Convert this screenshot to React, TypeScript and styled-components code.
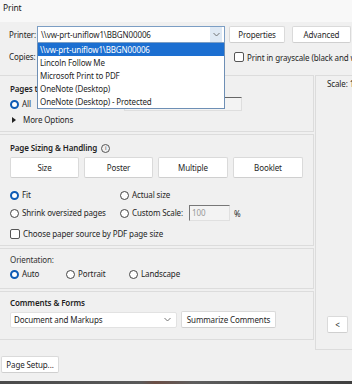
import React from "react";
import styled, { createGlobalStyle } from "styled-components";

const Global = createGlobalStyle`
  html, body { margin: 0; padding: 0; }
  body {
    background: #f0f0f0;
    font-family: "Noto Sans", "Open Sans", sans-serif;
    font-size: 8px;
    letter-spacing: -0.12px;
    color: #1f1f1f;
    width: 352px;
    height: 384px;
    overflow: hidden;
  }
  * { box-sizing: border-box; }
`;

const Window = styled.div`
  position: relative;
  width: 352px;
  height: 384px;
  overflow: hidden;
  display: flex;
  flex-direction: column;
`;

const TitleBar = styled.div`
  height: 22px;
  padding: 2px 0 0 3px;
  background: #f8f8f8;
  font-size: 8.5px;
  line-height: 12px;
  color: #1a1a1a;
`;

const Header = styled.div`
  position: relative;
  padding: 4px 0 0 9px;
  display: flex;
  flex-direction: column;
  gap: 8px;
  height: 53px;
`;

const Row = styled.div`
  display: flex;
  align-items: center;
  white-space: nowrap;
`;

const Label = styled.span<{ $w?: number }>`
  width: ${(p) => p.$w ?? 28}px;
  flex: none;
  line-height: 12px;
`;

const Select = styled.div<{ $w: number; $focus?: boolean }>`
  width: ${(p) => p.$w}px;
  height: ${(p) => (p.$focus ? 17 : 16)}px;
  flex: none;
  display: flex;
  align-items: center;
  justify-content: space-between;
  padding-left: 3px;
  background: #fff;
  border: 1px solid ${(p) => (p.$focus ? "#7c9ec4" : "#e2e2e2")};
  border-radius: ${(p) => (p.$focus ? 0 : 2)}px;
`;

const Chevron = styled.span<{ $hl?: boolean }>`
  width: 12px;
  height: 100%;
  display: flex;
  align-items: center;
  justify-content: center;
  background: ${(p) => (p.$hl ? "#dfe9f4" : "transparent")};
  margin-right: ${(p) => (p.$hl ? 2 : 3)}px;
`;

const Button = styled.button<{ $w: number; $h?: number; $ml?: number }>`
  width: ${(p) => p.$w}px;
  height: ${(p) => p.$h ?? 17}px;
  margin-left: ${(p) => p.$ml ?? 0}px;
  flex: none;
  padding: 0;
  background: #fff;
  border: 1px solid #dadada;
  border-bottom-color: #cfcfcf;
  border-radius: 2px;
  font: inherit;
  letter-spacing: inherit;
  color: #1f1f1f;
  display: flex;
  align-items: center;
  justify-content: center;
  white-space: nowrap;
`;

const CheckBox = styled.span`
  width: 10px;
  height: 10px;
  flex: none;
  border: 1px solid #555;
  border-radius: 2px;
  background: #fff;
  margin-right: 3px;
`;

const Option = styled.label<{ $w?: number }>`
  display: flex;
  align-items: center;
  white-space: nowrap;
  width: ${(p) => (p.$w ? `${p.$w}px` : "auto")};
  flex: none;
  line-height: 12px;
`;

const Radio = styled.span<{ $on?: boolean }>`
  width: 9px;
  height: 9px;
  flex: none;
  border-radius: 50%;
  margin-right: 3px;
  background: #fff;
  border: ${(p) => (p.$on ? "2.5px solid #0f5bb5" : "1px solid #444")};
`;

const DropList = styled.ul`
  position: absolute;
  left: 37px;
  top: 21px;
  width: 188px;
  margin: 0;
  padding: 0;
  list-style: none;
  background: #fff;
  border: 1px solid #6e8fb5;
  border-top: none;
  z-index: 5;
`;

const DropItem = styled.li<{ $sel?: boolean }>`
  height: 13px;
  line-height: 13px;
  padding-left: 2px;
  white-space: nowrap;
  background: ${(p) => (p.$sel ? "#1c6fd1" : "transparent")};
  color: ${(p) => (p.$sel ? "#fff" : "#1f1f1f")};
`;

const Main = styled.div`
  display: flex;
  gap: 1px;
  margin-left: -1px;
`;

const LeftCol = styled.div`
  width: 315px;
  flex: none;
  display: flex;
  flex-direction: column;
  gap: 2px;
`;

const Section = styled.section<{ $h: number }>`
  height: ${(p) => p.$h}px;
  border: 1px solid #dcdcdc;
  background: #f0f0f0;
  padding: 0 0 0 10px;
  display: flex;
  flex-direction: column;
`;

const SectionTitle = styled.div<{ $mt: number; $bold?: boolean }>`
  margin-top: ${(p) => p.$mt}px;
  font-weight: ${(p) => (p.$bold === false ? 400 : 600)};
  color: ${(p) => (p.$bold === false ? "#333" : "#1f1f1f")};
  line-height: 12px;
  display: flex;
  align-items: center;
  gap: 4px;
  white-space: nowrap;
`;

const InfoIcon = styled.span`
  width: 9px;
  height: 9px;
  border: 1px solid #555;
  border-radius: 50%;
  font-size: 6px;
  line-height: 7px;
  text-align: center;
  font-weight: 400;
  color: #444;
`;

const OptRow = styled.div<{ $mt: number }>`
  margin-top: ${(p) => p.$mt}px;
  display: flex;
  align-items: center;
  white-space: nowrap;
`;

const ButtonRow = styled.div`
  margin-top: 3px;
  display: flex;
  gap: 5px;
`;

const PagesInput = styled.div`
  width: 118px;
  height: 14px;
  margin-left: 93px;
  border: 1px solid #dedede;
  border-top: 1px solid #666;
  background: #f3f3f3;
`;

const ScaleInput = styled.div`
  width: 41px;
  height: 16px;
  margin: 0 4px 0 6px;
  border: 1px solid #e0e0e0;
  border-top-color: #777;
  border-left-color: #777;
  background: #f3f3f3;
  color: #999;
  padding-left: 2px;
  line-height: 14px;
`;

const Triangle = styled.span`
  width: 0;
  height: 0;
  border-top: 3px solid transparent;
  border-bottom: 3px solid transparent;
  border-left: 4px solid #222;
  margin: 0 7px 0 2px;
`;

const RightPanel = styled.aside`
  width: 40px;
  height: 275px;
  flex: none;
  border: 1px solid #dcdcdc;
  padding: 2px 0 16px 11px;
  display: flex;
  flex-direction: column;
  justify-content: space-between;
  white-space: nowrap;
  overflow: hidden;
`;

const Footer = styled.div`
  padding: 6px 0 0 1px;
  flex: 1;
`;

const BottomStrip = styled.div`
  height: 3px;
  background: linear-gradient(90deg, #4a4a4a 0%, #5a5a5a 40%, #6b4e45 44%, #5e5e5e 55%, #3f3f3f 100%);
`;

const ChevronSvg = () => (
  <svg width="7" height="5" viewBox="0 0 7 5">
    <path d="M0.5 1 L3.5 4 L6.5 1" fill="none" stroke="#666" strokeWidth="0.9" />
  </svg>
);

export default function App() {
  return (
    <Window>
      <Global />
      <TitleBar>Print</TitleBar>
      <Header>
        <Row>
          <Label>Printer:</Label>
          <Select $w={188} $focus>
            <span>\\vw-prt-uniflow1\BBGN00006</span>
            <Chevron $hl>
              <ChevronSvg />
            </Chevron>
          </Select>
          <Button $w={56} $ml={4}>Properties</Button>
          <Button $w={59} $ml={7}>Advanced</Button>
        </Row>
        <Row>
          <Label $w={225}>Copies:</Label>
          <CheckBox />
          <span>Print in grayscale (black and w</span>
        </Row>
        <DropList>
          <DropItem $sel>\\vw-prt-uniflow1\BBGN00006</DropItem>
          <DropItem>Lincoln Follow Me</DropItem>
          <DropItem>Microsoft Print to PDF</DropItem>
          <DropItem>OneNote (Desktop)</DropItem>
          <DropItem>OneNote (Desktop) - Protected</DropItem>
        </DropList>
      </Header>
      <Main>
        <LeftCol>
          <Section $h={57}>
            <SectionTitle $mt={7}>Pages to Print</SectionTitle>
            <OptRow $mt={2}>
              <Option>
                <Radio $on />
                All
              </Option>
              <PagesInput />
            </OptRow>
            <OptRow $mt={3}>
              <Triangle />
              More Options
            </OptRow>
          </Section>
          <Section $h={112}>
            <SectionTitle $mt={7}>
              Page Sizing &amp; Handling <InfoIcon>i</InfoIcon>
            </SectionTitle>
            <ButtonRow>
              <Button $w={69} $h={21}>Size</Button>
              <Button $w={69} $h={21}>Poster</Button>
              <Button $w={70} $h={21}>Multiple</Button>
              <Button $w={70} $h={21}>Booklet</Button>
            </ButtonRow>
            <OptRow $mt={11}>
              <Option $w={110}>
                <Radio $on />
                Fit
              </Option>
              <Option>
                <Radio />
                Actual size
              </Option>
            </OptRow>
            <OptRow $mt={4}>
              <Option $w={110}>
                <Radio />
                Shrink oversized pages
              </Option>
              <Option>
                <Radio />
                Custom Scale:
              </Option>
              <ScaleInput>100</ScaleInput>
              <span>%</span>
            </OptRow>
            <OptRow $mt={7}>
              <CheckBox />
              Choose paper source by PDF page size
            </OptRow>
          </Section>
          <Section $h={41}>
            <SectionTitle $mt={5} $bold={false}>Orientation:</SectionTitle>
            <OptRow $mt={2}>
              <Option $w={56}>
                <Radio $on />
                Auto
              </Option>
              <Option $w={63}>
                <Radio />
                Portrait
              </Option>
              <Option>
                <Radio />
                Landscape
              </Option>
            </OptRow>
          </Section>
          <Section $h={49}>
            <SectionTitle $mt={5}>Comments &amp; Forms</SectionTitle>
            <OptRow $mt={2}>
              <Select $w={167}>
                <span>Document and Markups</span>
                <Chevron>
                  <ChevronSvg />
                </Chevron>
              </Select>
              <Button $w={95} $ml={4}>Summarize Comments</Button>
            </OptRow>
          </Section>
        </LeftCol>
        <RightPanel>
          <span>Scale: 1</span>
          <Button $w={21} $h={17}>&lt;</Button>
        </RightPanel>
      </Main>
      <Footer>
        <Button $w={58} $h={17}>Page Setup...</Button>
      </Footer>
      <BottomStrip />
    </Window>
  );
}
